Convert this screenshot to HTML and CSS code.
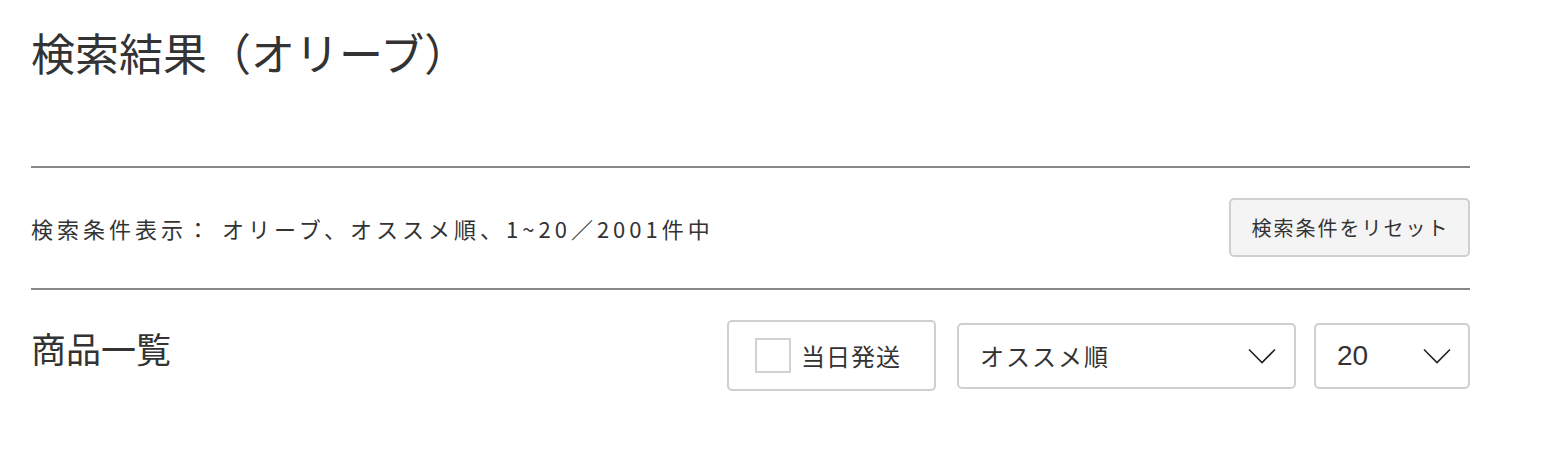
FILE: index.html
```html
<!DOCTYPE html>
<html lang="ja">
<head>
<meta charset="utf-8">
<title>検索結果（オリーブ）</title>
<link rel="stylesheet" href="styles.css">
</head>
<body>
<div class="page">
  <h1 class="title">検索結果（オリーブ）</h1>
  <div class="conditions">
    <p class="cond-text"><span class="cond-label">検索条件表示：</span><span class="cond-value">オリーブ、オススメ順、1~20／2001件中</span></p>
    <button class="reset-btn" type="button">検索条件をリセット</button>
  </div>
  <div class="list-head">
    <h2 class="list-title">商品一覧</h2>
    <div class="controls">
      <label class="sameday">
        <span class="check-box"></span>
        <span class="sameday-text">当日発送</span>
      </label>
      <div class="select select-sort">
        <span class="select-text">オススメ順</span>
        <svg class="chevron" width="28" height="16" viewBox="0 0 28 16"><polyline points="1,1.5 14,14.5 27,1.5" fill="none" stroke="#222" stroke-width="1.6"/></svg>
      </div>
      <div class="select select-count">
        <span class="select-text num">20</span>
        <svg class="chevron" width="28" height="16" viewBox="0 0 28 16"><polyline points="1,1.5 14,14.5 27,1.5" fill="none" stroke="#222" stroke-width="1.6"/></svg>
      </div>
    </div>
  </div>
</div>
</body>
</html>
```

FILE: styles.css
```css
* { box-sizing: border-box; }

body {
  margin: 0;
  background: #fff;
  color: #333;
  font-family: "Noto Sans CJK JP", "Noto Sans", sans-serif;
}

.page {
  margin-left: 31px;
  width: 1439px;
}

.title {
  margin: 30px 0 0;
  height: 136px;
  font-size: 44px;
  line-height: 44px;
  font-weight: 400;
  color: #333;
}

.conditions {
  border-top: 2px solid #888;
  border-bottom: 2px solid #888;
  height: 124px;
  display: flex;
  align-items: center;
  justify-content: space-between;
}

.cond-text {
  margin: 0;
  font-size: 22px;
  line-height: 26px;
  letter-spacing: 4px;
  display: flex;
}

.cond-value {
  margin-left: 9px;
}

.reset-btn {
  width: 241px;
  height: 59px;
  margin-top: -1px;
  border: 2px solid #cfcfcf;
  border-radius: 5px;
  background: #f4f4f4;
  color: #333;
  font-family: inherit;
  font-size: 20px;
  letter-spacing: 2px;
  padding: 0 0 0 2px;
}

.list-head {
  display: flex;
  justify-content: space-between;
  align-items: flex-start;
  padding-top: 30px;
}

.list-title {
  margin: 10px 0 0;
  font-size: 35px;
  line-height: 36px;
  font-weight: 400;
  color: #333;
}

.controls {
  display: flex;
  align-items: center;
}

.sameday {
  width: 209px;
  height: 71px;
  border: 2px solid #cfcfcf;
  border-radius: 5px;
  display: flex;
  align-items: center;
  padding-left: 26px;
  margin-right: 21px;
}

.check-box {
  width: 36px;
  height: 35px;
  border: 2px solid #d2d2d2;
  margin-right: 10px;
}

.sameday-text {
  font-size: 24px;
  line-height: 30px;
  letter-spacing: 1px;
}

.select {
  height: 66px;
  border: 2px solid #cfcfcf;
  border-radius: 5px;
  display: flex;
  align-items: center;
  justify-content: space-between;
  padding-left: 21px;
  padding-right: 18px;
}

.select-sort {
  width: 339px;
  margin-right: 18px;
}

.select-count {
  width: 156px;
  padding-right: 17px;
}

.select-text {
  font-size: 24px;
  line-height: 30px;
  letter-spacing: 2px;
}

.num {
  font-family: "Liberation Sans", Arial, sans-serif;
  font-size: 28px;
  letter-spacing: 0;
}

.chevron {
  display: block;
}
```
